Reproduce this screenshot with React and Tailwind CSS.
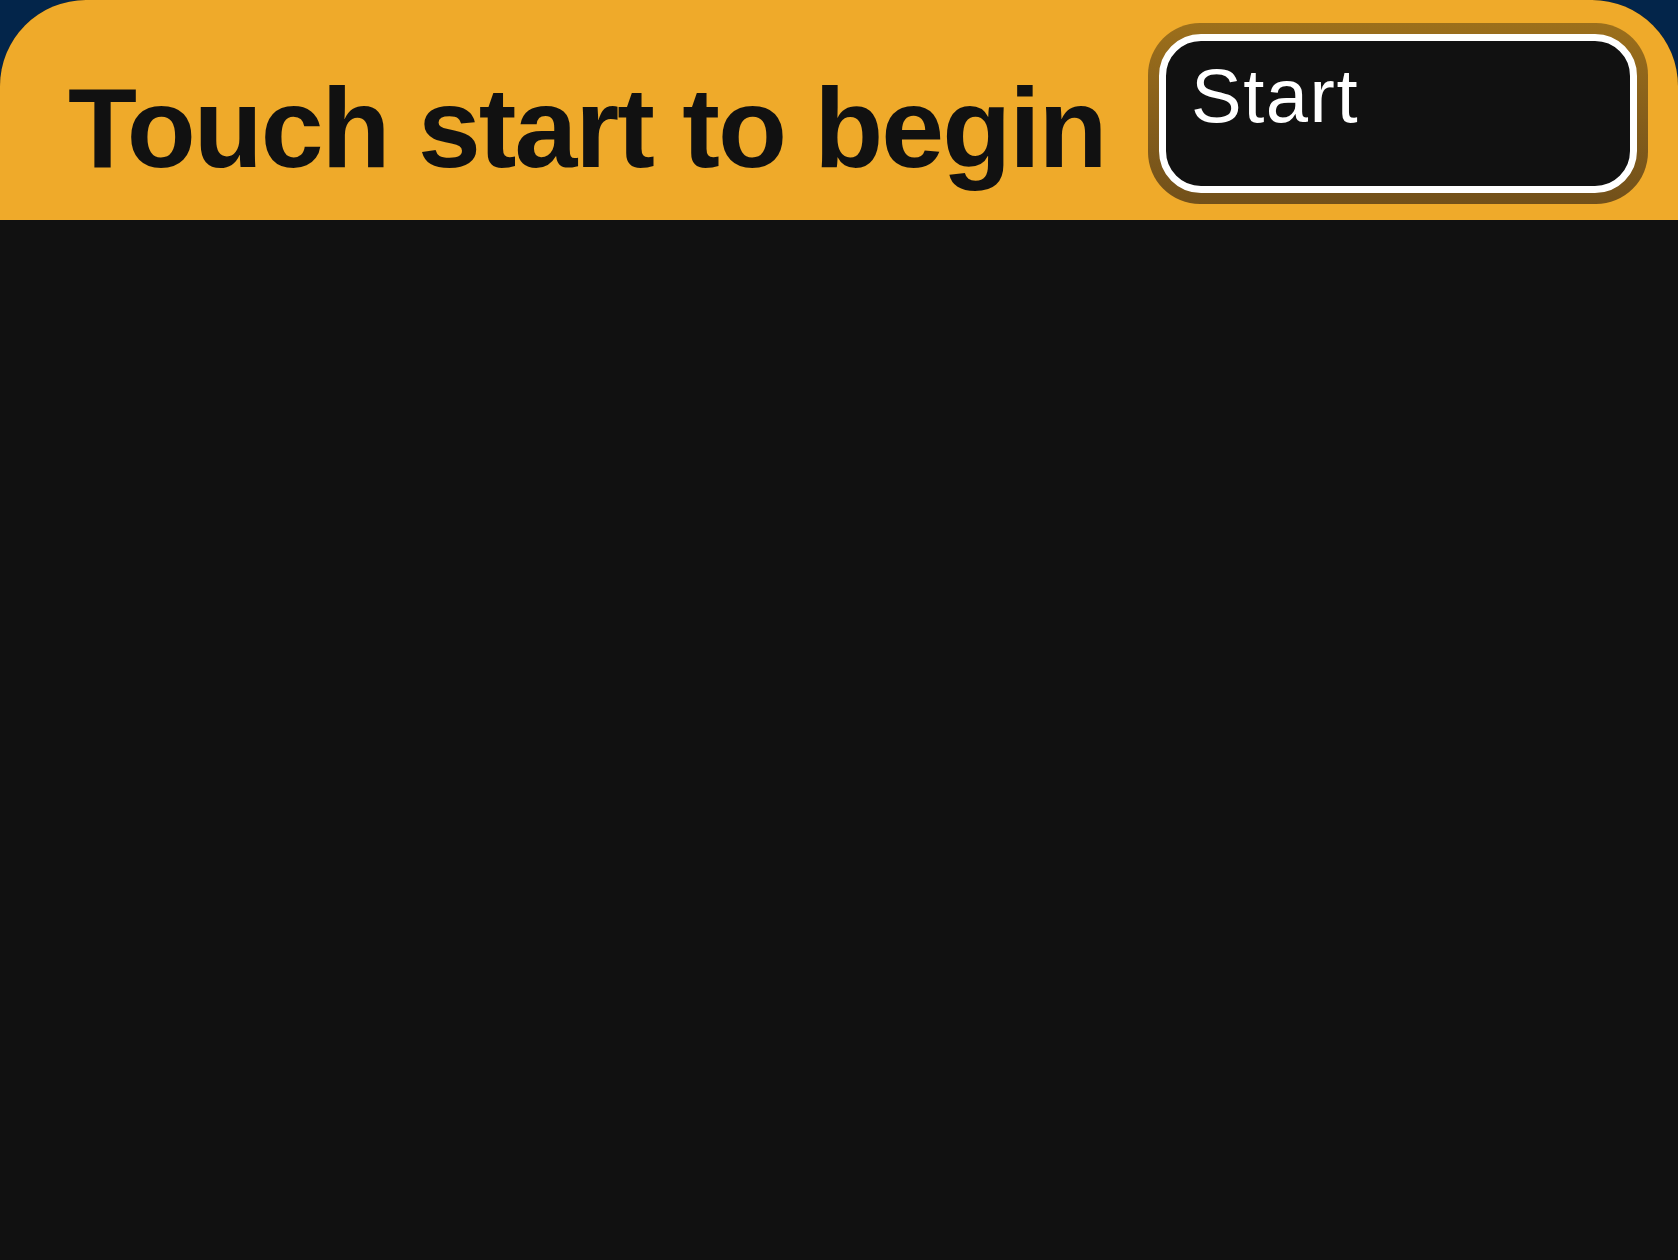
import React from 'react'

// Kiosk idle screen: amber title bar with a start button, empty body below
function StartButton() {
  return (
    <button className="rounded-[52px] bg-gradient-to-b from-[#9c6f1b] to-[#72501a] p-[11px]">
      <div className="flex h-[159px] w-[478px] items-start rounded-[42px] border-[7px] border-white bg-[#111111] pl-[25px] pt-[17px]">
        <span className="text-[76px] font-normal leading-none tracking-[1.5px] text-white" style={{ fontFamily: '"Liberation Sans", Arial, sans-serif' }}>
          Start
        </span>
      </div>
    </button>
  )
}

export default function App() {
  return (
    <div className="h-screen w-full overflow-hidden bg-[#03254a]">
      <div className="flex h-full flex-col overflow-hidden rounded-t-[86px] bg-[#111111]">
        {/* ── Title bar ── */}
        <header className="flex h-[220px] shrink-0 items-start justify-between bg-[#efaa2a] pl-[68px] pr-[30px]">
          <h1
            className="pt-[72px] text-[113px] font-bold leading-none tracking-[-2px] text-[#111111]"
            style={{ fontFamily: '"Liberation Sans", Arial, sans-serif' }}
          >
            Touch start to begin
          </h1>
          <div className="pt-[23px]">
            <StartButton />
          </div>
        </header>

        {/* ── Body ── */}
        <main className="flex-1 bg-[#111111]" />
      </div>
    </div>
  )
}
